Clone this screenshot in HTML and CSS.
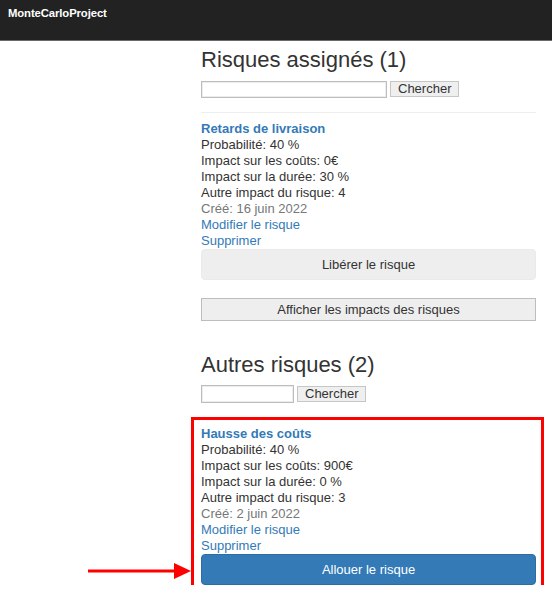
FILE: index.html
```html
<!DOCTYPE html>
<html lang="fr">
<head>
<meta charset="utf-8">
<title>MonteCarloProject</title>
<link rel="stylesheet" href="styles.css">
</head>
<body>
<header class="navbar">
  <a class="brand" href="#">MonteCarloProject</a>
</header>

<main class="content">
  <section class="assigned">
    <h2 class="section-title">Risques assignés (1)</h2>
    <form class="search">
      <input class="search-input search-input--wide" type="text">
      <button class="search-btn" type="button">Chercher</button>
    </form>
    <hr class="divider">

    <div class="risk">
      <a class="risk-title" href="#">Retards de livraison</a>
      <div>Probabilité: 40 %</div>
      <div>Impact sur les coûts: 0€</div>
      <div>Impact sur la durée: 30 %</div>
      <div>Autre impact du risque: 4</div>
      <div class="muted">Créé: 16 juin 2022</div>
      <a class="link" href="#">Modifier le risque</a>
      <a class="link" href="#">Supprimer</a>
      <button class="btn btn-default" type="button">Libérer le risque</button>
    </div>

    <button class="btn-plain" type="button">Afficher les impacts des risques</button>
  </section>

  <section class="others">
    <h2 class="section-title section-title--spaced">Autres risques (2)</h2>
    <form class="search">
      <input class="search-input search-input--narrow" type="text">
      <button class="search-btn" type="button">Chercher</button>
    </form>

    <div class="risk risk--spaced">
      <a class="risk-title" href="#">Hausse des coûts</a>
      <div>Probabilité: 40 %</div>
      <div>Impact sur les coûts: 900€</div>
      <div>Impact sur la durée: 0 %</div>
      <div>Autre impact du risque: 3</div>
      <div class="muted">Créé: 2 juin 2022</div>
      <a class="link" href="#">Modifier le risque</a>
      <a class="link" href="#">Supprimer</a>
      <button class="btn btn-primary" type="button">Allouer le risque</button>

      <span class="highlight"></span>
      <svg class="pointer" width="103" height="18" viewBox="0 0 103 18">
        <rect x="0" y="7.5" width="88" height="3" fill="#ff0000"/>
        <polygon points="86,1 103,9 86,17" fill="#ff0000"/>
      </svg>
    </div>
  </section>
</main>
</body>
</html>
```

FILE: styles.css
```css
* {
  box-sizing: border-box;
}

html, body {
  margin: 0;
  background: #fff;
}

body {
  font-family: "Liberation Sans", Arial, Helvetica, sans-serif;
  font-size: 13px;
  line-height: 16px;
  color: #333;
}

/* top bar */
.navbar {
  height: 41px;
  background: #222;
  border-bottom: 1px solid #6a6a6a;
  padding: 5px 8px 0;
}

.brand {
  color: #fff;
  font-weight: bold;
  font-size: 11.3px;
  line-height: 12px;
  text-decoration: none;
  letter-spacing: -0.1px;
}

/* main column */
.content {
  padding-left: 201px;
  width: 536px;
}

.section-title {
  font-size: 22px;
  line-height: 24px;
  font-weight: 400;
  margin: 7px 0 8px;
  color: #333;
}

.section-title--spaced {
  margin-top: 32px;
}

/* search row */
.search {
  display: flex;
  align-items: center;
  gap: 3px;
  height: 18px;
  margin: 0;
}

.search-input {
  height: 18px;
  border: 1px solid #bdbdbd;
  box-shadow: inset 0 0 0 1px #ececec;
  padding: 0 3px;
  font: inherit;
  background: #fff;
}

.search-input--wide {
  width: 186px;
  height: 17px;
}

.search-input--narrow {
  width: 93px;
}

.search-btn {
  height: 16px;
  padding: 0 7px;
  border: 1px solid #c6c6c6;
  background: #efefef;
  font-family: inherit;
  font-size: 13px;
  line-height: 14px;
  color: #333;
}

.divider {
  border: 0;
  border-top: 1px solid #eee;
  margin: 14px 0 8px;
}

/* risk card */
.risk {
  display: flex;
  flex-direction: column;
  align-items: flex-start;
}

.risk--spaced {
  position: relative;
  margin-top: 23px;
}

.risk-title {
  font-weight: bold;
  color: #337ab7;
  text-decoration: none;
}

.muted {
  color: #777;
}

.link {
  color: #337ab7;
  text-decoration: none;
}

.btn {
  align-self: stretch;
  height: 31px;
  border-radius: 4px;
  font-family: inherit;
  font-size: 13px;
  line-height: 16px;
  padding: 0;
  text-align: center;
}

.btn-default {
  background: #eee;
  border: 1px solid #eaeaea;
  color: #333;
}

.btn-primary {
  background: #337ab7;
  border: 1px solid #2e6da4;
  color: #fff;
}

.btn-plain {
  display: block;
  width: 100%;
  height: 23px;
  margin-top: 18px;
  background: #eee;
  border: 1px solid #bdbdbd;
  font-family: inherit;
  font-size: 13px;
  color: #333;
  padding: 0;
}

/* callout frame and arrow */
.highlight {
  position: absolute;
  top: -9px;
  left: -10px;
  right: -8px;
  bottom: -7px;
  border: 3px solid #ff0000;
  pointer-events: none;
}

.pointer {
  position: absolute;
  left: -113px;
  top: 136px;
}
```
